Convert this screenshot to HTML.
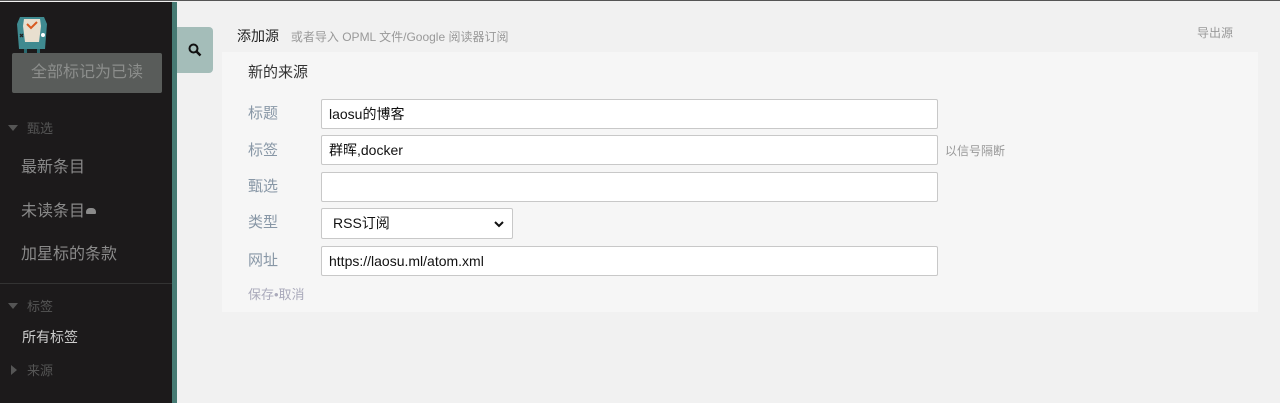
<!DOCTYPE html>
<html><head><meta charset="utf-8"><style>
*{box-sizing:border-box;margin:0;padding:0}
body{width:1280px;height:402px;overflow:hidden;font-family:"Liberation Sans","Noto Sans CJK SC",sans-serif;background:#f1f1f1;position:relative;border-top:1px solid #555}
.side{position:absolute;left:0;top:1px;width:172px;height:401px;background:#1c1a1b}
.stripe{position:absolute;left:172px;top:1px;width:5px;height:401px;background:#467a73}
.a{position:absolute;white-space:nowrap}
.btn{left:12px;top:52px;width:150px;height:40px;background:#595c5a;border-radius:2px;color:#8c8e8c;font-size:16px;text-align:center;line-height:40px}
.hd{font-size:13px;color:#555;left:27px}
.it{font-size:16px;color:#8a8a8a;left:21px}
.tri{position:absolute;width:0;height:0}
.search{left:177px;top:26px;width:36px;height:46px;background:#a4bdb9;border-radius:0 4px 4px 0}
.panel{left:222px;top:51px;width:1036px;height:260px;background:#f6f6f6}
.lbl{left:248px;font-size:15px;color:#8897a6}
.in{position:absolute;left:321px;width:617px;height:30px;background:#fff;border:1px solid #c8c8c8;border-radius:2px;font-size:14px;color:#111;padding-left:7px;line-height:28px}
</style></head><body>
<div class="side"></div><div class="stripe"></div>
<svg class="a" style="left:16px;top:14px" width="32" height="38" viewBox="0 0 32 38">
<rect x="8" y="33" width="3" height="5" fill="#2a6a70"/><rect x="21" y="33" width="3" height="5" fill="#2a6a70"/>
<path d="M4 2h24l3 7-2 25H3L1 9z" fill="#3f8a90"/>
<path d="M8 4h16l1 7-2 16H9L7 11z" fill="#e8dfcf"/>
<path d="M11 9l4 4 6-6" stroke="#d85a20" stroke-width="2" fill="none"/>
<circle cx="27" cy="20" r="2" fill="#fff"/><path d="M4 19l3 3M7 19l-3 3" stroke="#222" stroke-width="1.3"/>
</svg>
<div class="a btn">全部标记为已读</div>
<div class="tri" style="left:8px;top:124px;border-left:5px solid transparent;border-right:5px solid transparent;border-top:6px solid #555"></div>
<div class="a hd" style="top:117px">甄选</div>
<div class="a it" style="top:152px">最新条目</div>
<div class="a it" style="top:196px">未读条目<span style="display:inline-block;width:10px;height:6px;background:#8a8a8a;border-radius:4px 4px 1px 1px;margin-left:1px;vertical-align:2px"></span></div>
<div class="a it" style="top:239px">加星标的条款</div>
<div class="a" style="left:0;top:282px;width:172px;height:1px;background:#333"></div>
<div class="tri" style="left:8px;top:302px;border-left:5px solid transparent;border-right:5px solid transparent;border-top:6px solid #555"></div>
<div class="a hd" style="top:295px">标签</div>
<div class="a" style="left:22px;top:326px;font-size:14px;color:#ccc">所有标签</div>
<div class="tri" style="left:11px;top:364px;border-top:5px solid transparent;border-bottom:5px solid transparent;border-left:6px solid #555"></div>
<div class="a hd" style="top:359px">来源</div>
<div class="a search"><svg style="position:absolute;left:11px;top:16px" width="14" height="14" viewBox="0 0 14 14"><circle cx="5.5" cy="5.5" r="4" stroke="#111" stroke-width="2" fill="none"/><path d="M8.5 8.5l4 4" stroke="#111" stroke-width="2.5"/></svg></div>
<div class="a" style="left:237px;top:25px;font-size:14px;color:#222">添加源 <span style="font-size:12px;color:#999;margin-left:8px">或者导入 OPML 文件/Google 阅读器订阅</span></div>
<div class="a" style="left:1197px;top:23px;font-size:12px;color:#999">导出源</div>
<div class="a panel"></div>
<div class="a" style="left:248px;top:60px;font-size:15px;color:#333">新的来源</div>
<div class="a lbl" style="top:101px">标题</div>
<div class="in" style="top:98px">laosu的博客</div>
<div class="a lbl" style="top:138px">标签</div>
<div class="in" style="top:134px">群晖,docker</div>
<div class="a" style="left:945px;top:141px;font-size:12px;color:#999">以信号隔断</div>
<div class="a lbl" style="top:174px">甄选</div>
<div class="in" style="top:171px"></div>
<div class="a lbl" style="top:210px">类型</div>
<div class="in" style="top:207px;width:192px;height:31px;padding-left:11px">RSS订阅<svg style="position:absolute;right:8px;top:11px" width="10" height="8" viewBox="0 0 10 8"><path d="M1 2l4 4 4-4" stroke="#111" stroke-width="2" fill="none"/></svg></div>
<div class="a lbl" style="top:248px">网址</div>
<div class="in" style="top:245px">https://laosu.ml/atom.xml</div>
<div class="a" style="left:248px;top:283px;font-size:13px;color:#aab">保存•取消</div>
</body></html>
